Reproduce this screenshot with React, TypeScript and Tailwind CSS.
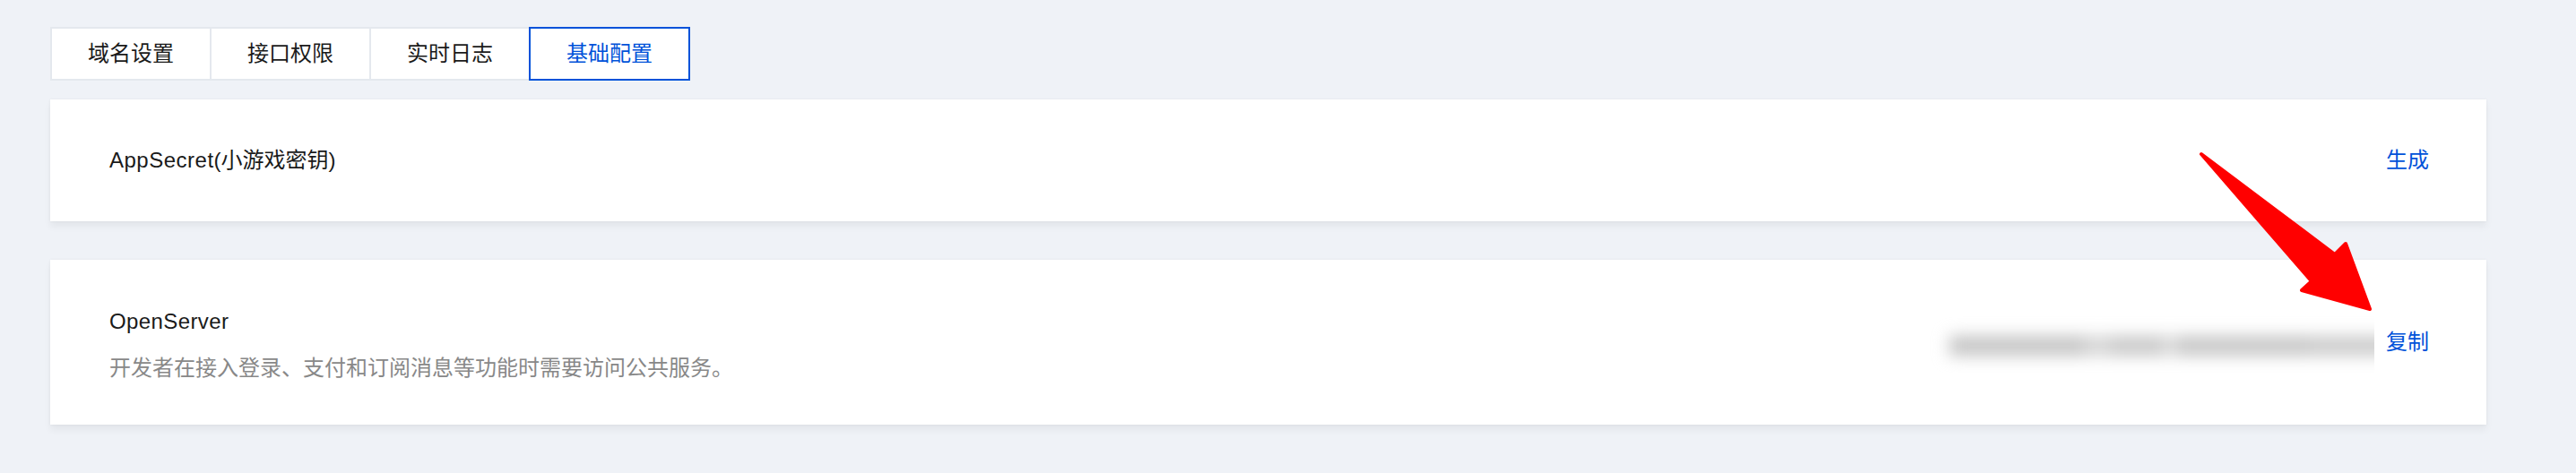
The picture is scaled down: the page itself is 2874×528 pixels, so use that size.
import React from "react";

const tabs = ["域名设置", "接口权限", "实时日志", "基础配置"];

const blobs = [
  { w: 150, c: "bg-[#c4c4c4]" },
  { w: 30, c: "bg-[#d4d4d4]" },
  { w: 60, c: "bg-[#c8c8c8]" },
  { w: 12, c: "bg-[#e0e0e0]" },
  { w: 150, c: "bg-[#c6c6c6]" },
  { w: 120, c: "bg-[#cbcbcb]" },
];

export default function App() {
  return (
    <div
      className="relative min-h-[528px] w-full bg-[#eff2f7] pl-[56px] pr-[100px] pt-[30px] text-[#1a1a1a]"
      style={{ fontFamily: '"Liberation Sans", "Noto Sans CJK SC", sans-serif' }}
    >
      <div className="flex">
        {tabs.map((t, i) => {
          const active = i === 3;
          return (
            <div
              key={t}
              className={
                active
                  ? "relative z-10 -ml-[2px] flex h-[60px] w-[180px] items-center justify-center border-2 border-[#0052d9] bg-white text-[24px] text-[#0052d9]"
                  : i === 0
                  ? "flex h-[60px] w-[180px] items-center justify-center border-2 border-[#e4e8ee] bg-white text-[24px]"
                  : "-ml-[2px] flex h-[60px] w-[180px] items-center justify-center border-2 border-[#e4e8ee] bg-white text-[24px]"
              }
            >
              {t}
            </div>
          );
        })}
      </div>

      <div className="mt-[21px] flex h-[136px] items-center justify-between bg-white pl-[66px] pr-[64px] shadow-[0_0_3px_rgba(0,0,0,0.06),0_6px_8px_rgba(0,0,0,0.05)]">
        <div className="text-[24px] leading-[32px]">
          <span className="tracking-[0.5px]">AppSecret</span>(小游戏密钥)
        </div>
        <div className="cursor-pointer text-[24px] leading-[32px] text-[#0052d9]">生成</div>
      </div>

      <div className="mt-[43px] flex h-[184px] items-center justify-between bg-white pl-[66px] pr-[64px] shadow-[0_0_3px_rgba(0,0,0,0.06),0_6px_8px_rgba(0,0,0,0.05)]">
        <div className="flex flex-col pt-[5px]">
          <div className="text-[24px] leading-[32px] tracking-[0.4px]">OpenServer</div>
          <div className="mt-[20px] text-[24px] leading-[32px] text-[#888888]">
            开发者在接入登录、支付和订阅消息等功能时需要访问公共服务。
          </div>
        </div>
        <div className="flex items-center gap-[13px]">
          <div className="flex h-[67px] w-[510px] items-center overflow-hidden bg-white pl-[36px] pt-[8px]">
            <div className="flex shrink-0 items-center blur-[9px]">
              {blobs.map((b, i) => (
                <div
                  key={i}
                  className={"h-[22px] shrink-0 " + b.c}
                  style={{ width: b.w }}
                />
              ))}
            </div>
          </div>
          <div className="cursor-pointer text-[24px] leading-[32px] text-[#0052d9]">复制</div>
        </div>
      </div>

      <svg
        className="pointer-events-none absolute left-0 top-0"
        width="2874"
        height="528"
        viewBox="0 0 2874 528"
      >
        <polygon
          points="2456,172 2605,284 2617,272 2644,345 2568,324 2579,314"
          fill="#ff0000"
          stroke="#ff0000"
          strokeWidth="4"
          strokeLinejoin="round"
        />
      </svg>
    </div>
  );
}
